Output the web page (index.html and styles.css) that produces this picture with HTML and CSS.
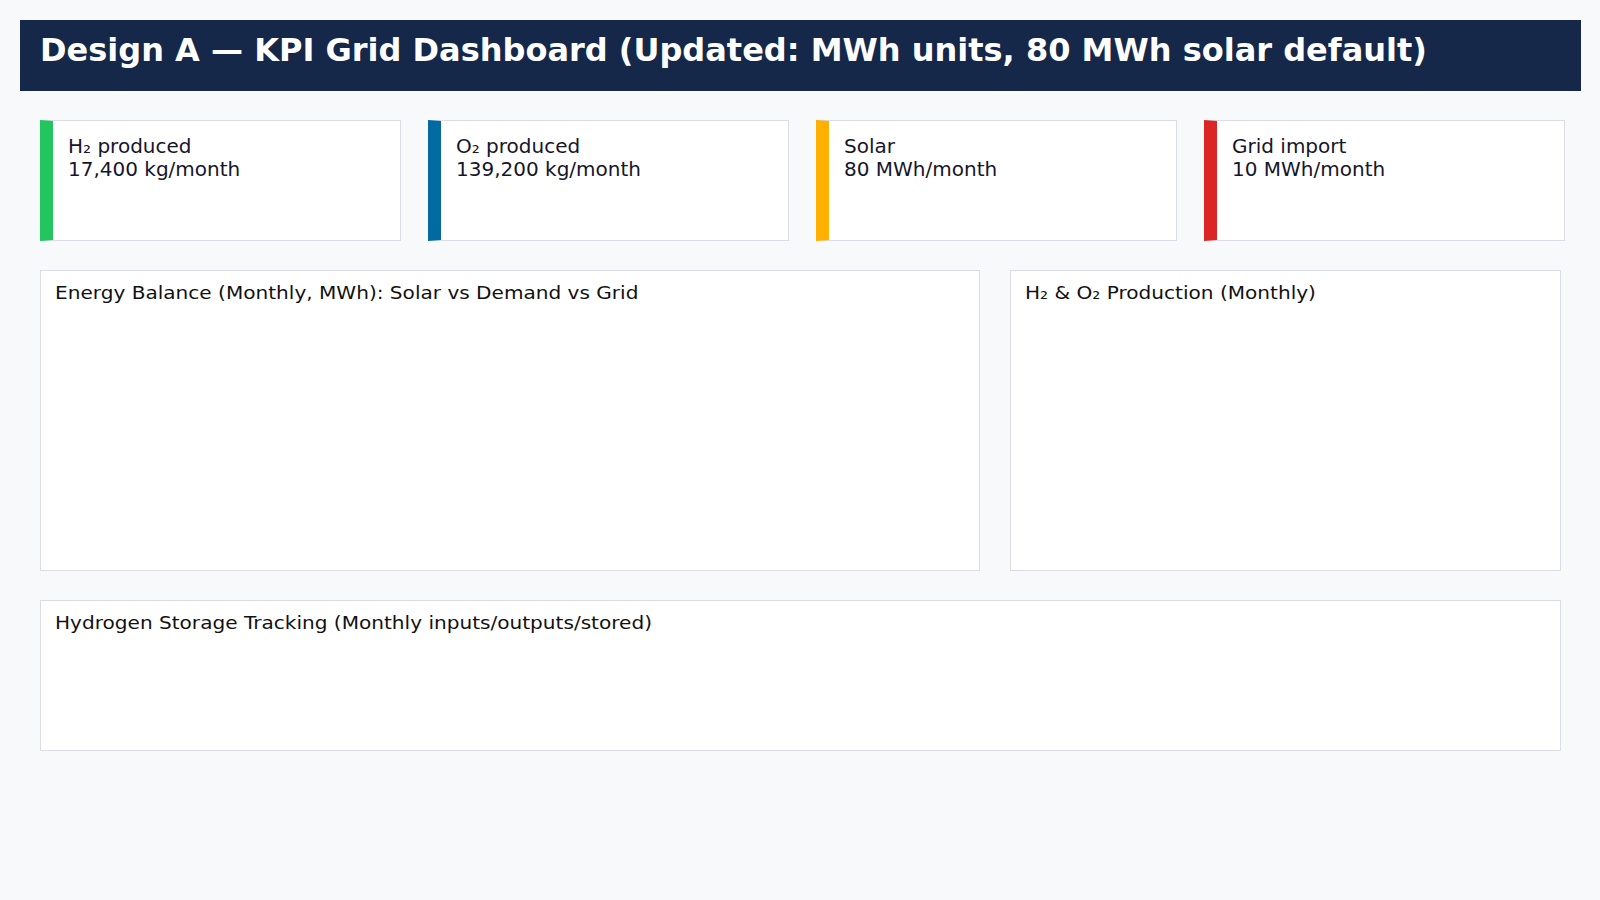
FILE: index.html
```html
<!DOCTYPE html>
<html lang="en">
<head>
<meta charset="utf-8">
<title>Design A — KPI Grid Dashboard</title>
<link rel="stylesheet" href="styles.css">
</head>
<body>
<header class="topbar">
  <h1 class="title">Design A — KPI Grid Dashboard (Updated: MWh units, 80 MWh solar default)</h1>
</header>
<main class="content">
  <section class="kpis">
    <div class="kpi kpi-green">
      <div class="kpi-label">H₂ produced</div>
      <div class="kpi-value">17,400 kg/month</div>
    </div>
    <div class="kpi kpi-blue">
      <div class="kpi-label">O₂ produced</div>
      <div class="kpi-value">139,200 kg/month</div>
    </div>
    <div class="kpi kpi-amber">
      <div class="kpi-label">Solar</div>
      <div class="kpi-value">80 MWh/month</div>
    </div>
    <div class="kpi kpi-red">
      <div class="kpi-label">Grid import</div>
      <div class="kpi-value">10 MWh/month</div>
    </div>
  </section>
  <section class="charts">
    <div class="panel panel-tall">
      <div class="panel-title">Energy Balance (Monthly, MWh): Solar vs Demand vs Grid</div>
    </div>
    <div class="panel panel-tall">
      <div class="panel-title">H₂ &amp; O₂ Production (Monthly)</div>
    </div>
  </section>
  <section class="panel panel-storage">
    <div class="panel-title">Hydrogen Storage Tracking (Monthly inputs/outputs/stored)</div>
  </section>
</main>
</body>
</html>
```

FILE: styles.css
```css
* { box-sizing: border-box; }

html, body {
  margin: 0;
  background: #f8f9fb;
}

body {
  padding: 20px;
  font-family: "DejaVu Sans", "Liberation Sans", sans-serif;
  color: #16162a;
}

.topbar {
  width: 1561px;
  height: 71px;
  background: #15284a;
  padding: 11px 20px 0;
}

.title {
  margin: 0;
  font-size: 32px;
  font-weight: bold;
  color: #ffffff;
  line-height: normal;
}

.content {
  padding: 29px 20px 0;
  display: flex;
  flex-direction: column;
  gap: 29px;
}

.kpis {
  display: grid;
  grid-template-columns: repeat(4, 361px);
  column-gap: 27px;
}

.kpi {
  height: 121px;
  background: #ffffff;
  border: 1px solid #dcdbe6;
  border-left-width: 13px;
  padding: 14px 15px;
  font-size: 20px;
  line-height: 23px;
}

.kpi-green { border-left-color: #22c55e; }
.kpi-blue { border-left-color: #0369a1; }
.kpi-amber { border-left-color: #ffb000; }
.kpi-red { border-left-color: #dc2626; }

.charts {
  display: grid;
  grid-template-columns: 940px 551px;
  column-gap: 30px;
  width: 1521px;
}

.panel {
  background: #ffffff;
  border: 1px solid #dcdbe6;
  padding: 11px 14px;
}

.panel-tall { height: 301px; }

.panel-storage {
  width: 1521px;
  height: 151px;
}

.panel-title {
  display: inline-block;
  font-size: 18px;
  line-height: normal;
  color: #111111;
  white-space: nowrap;
  transform: scaleX(1.115);
  transform-origin: left center;
}
```
